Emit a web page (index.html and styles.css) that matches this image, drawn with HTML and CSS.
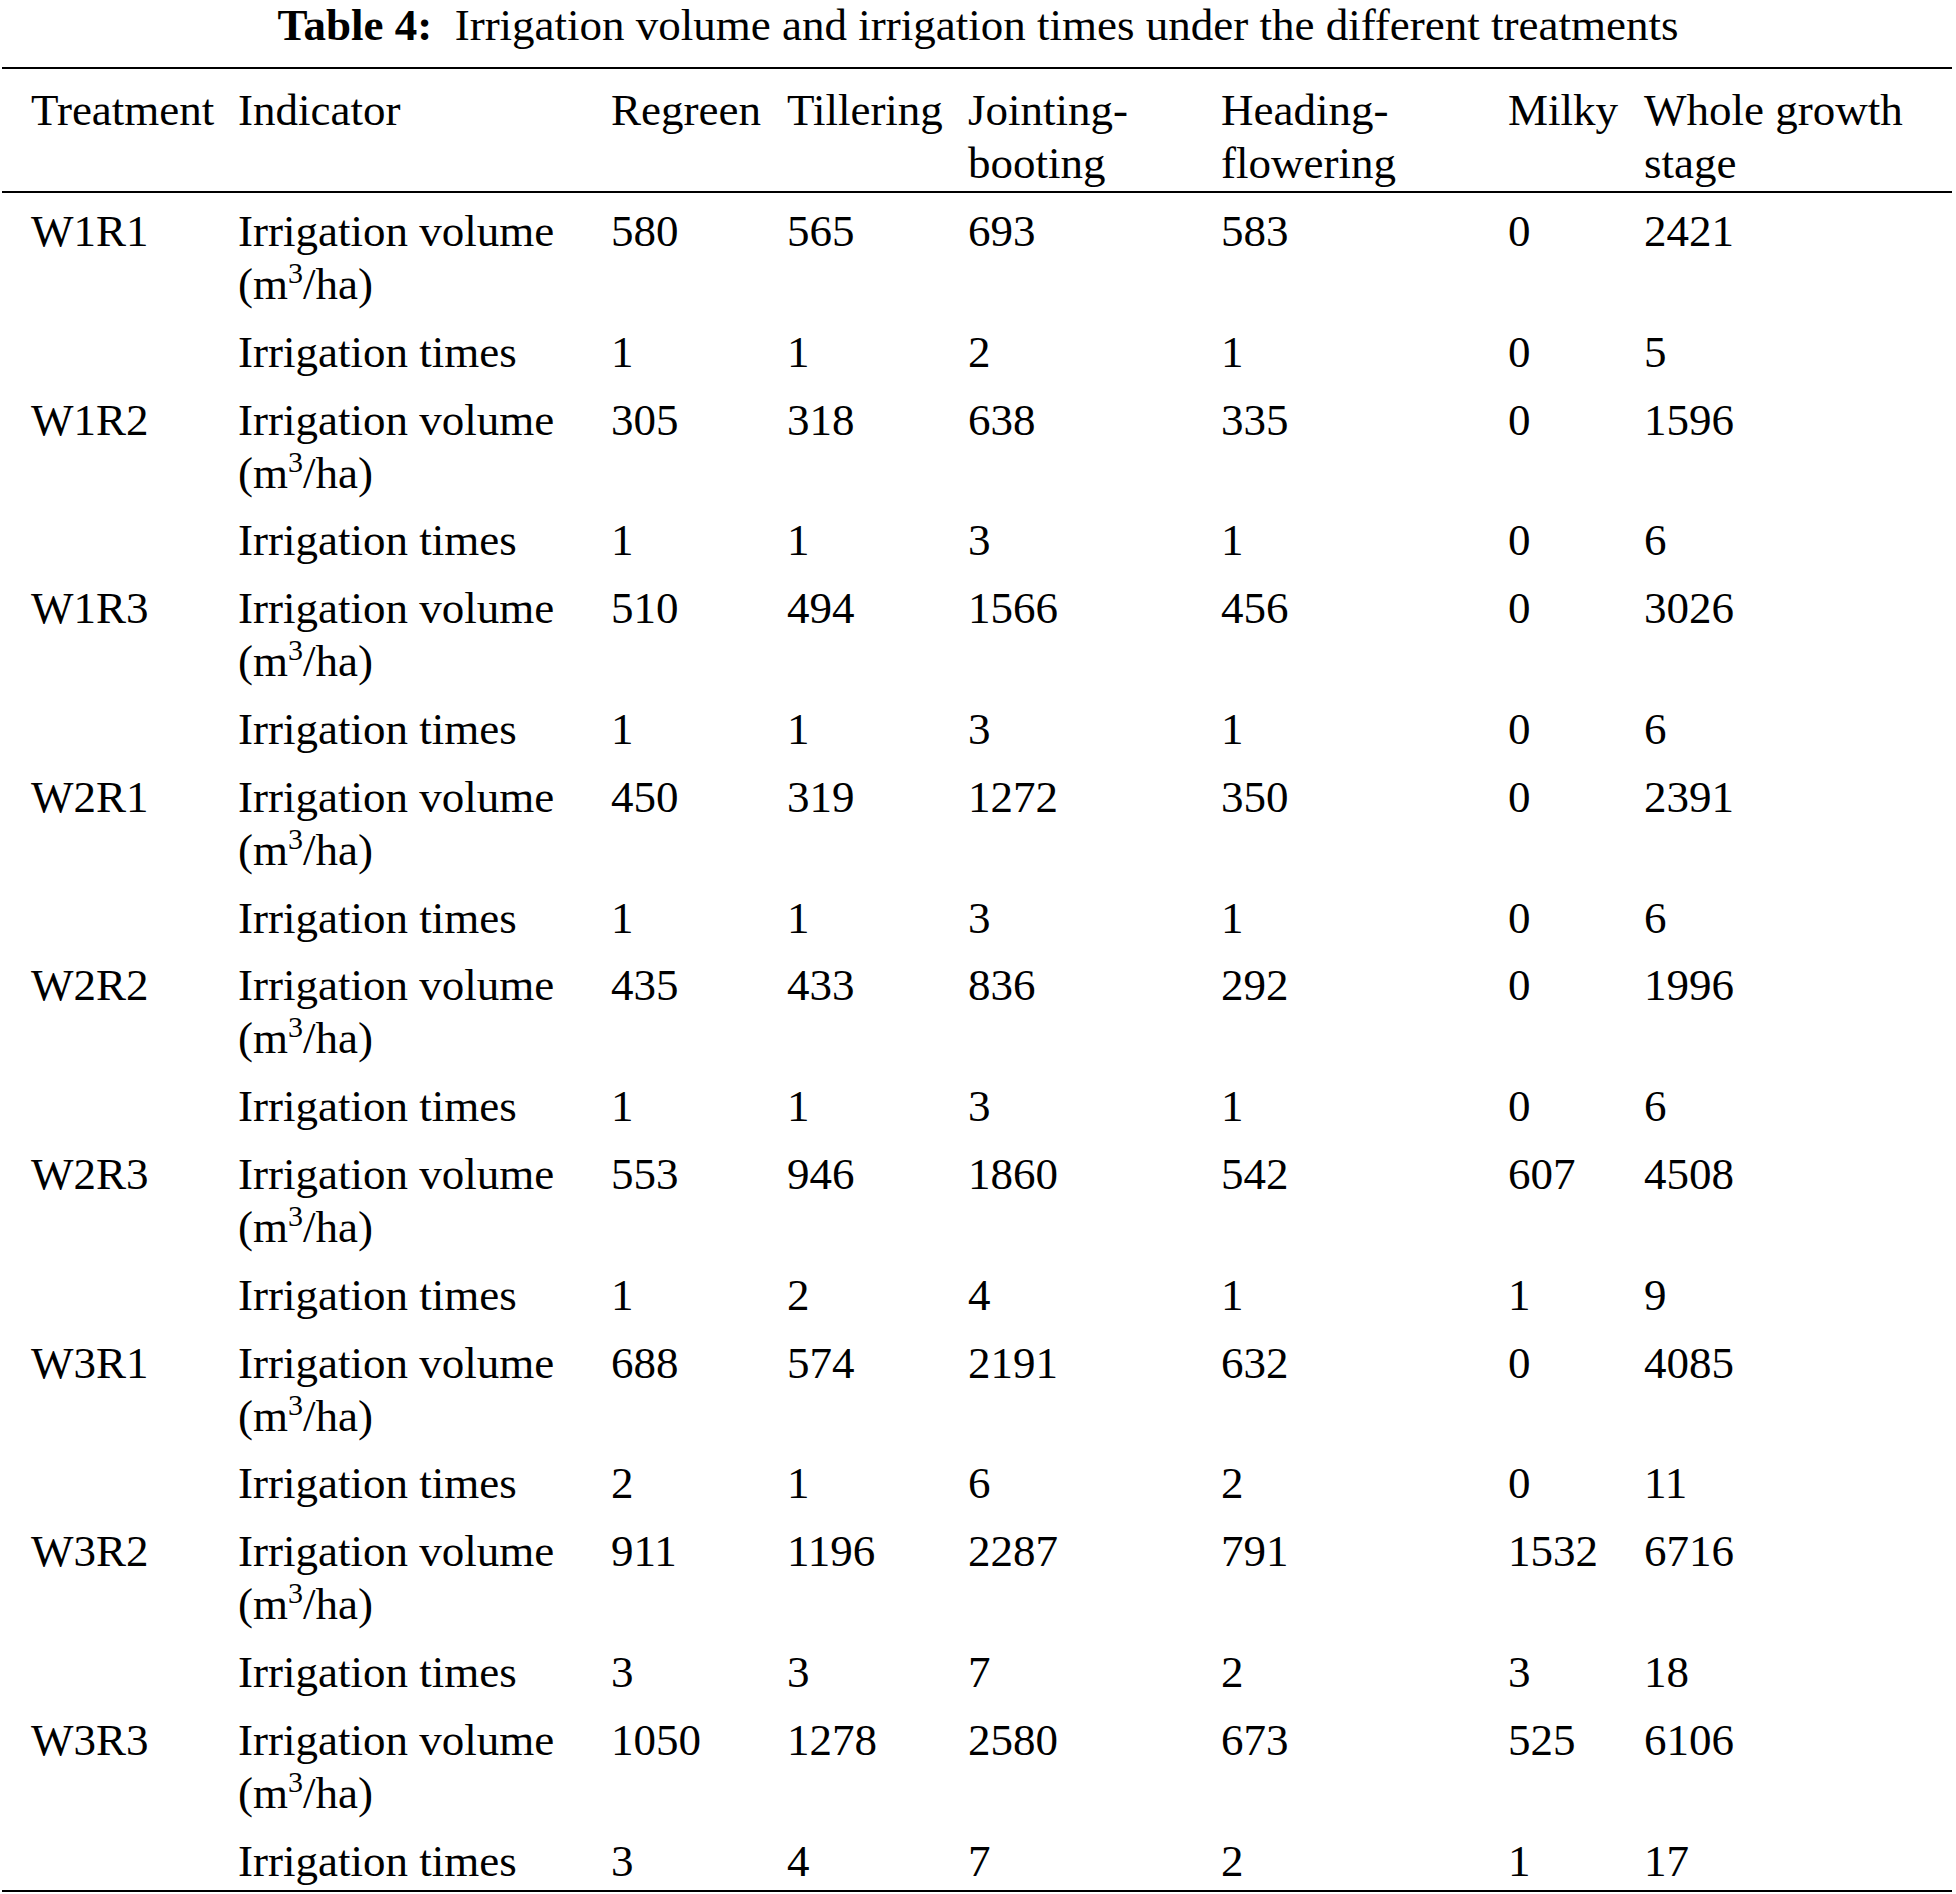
FILE: index.html
```html
<!DOCTYPE html>
<html lang="en">
<head>
<meta charset="utf-8">
<title>Table 4</title>
<link rel="stylesheet" href="styles.css">
</head>
<body>
<div class="page">
  <p class="caption"><b>Table 4:</b>&nbsp; Irrigation volume and irrigation times under the different treatments</p>
  <table class="data">
    <colgroup>
      <col class="c1"><col class="c2"><col class="c3"><col class="c4"><col class="c5"><col class="c6"><col class="c7"><col class="c8">
    </colgroup>
    <thead>
      <tr>
        <th>Treatment</th>
        <th>Indicator</th>
        <th>Regreen</th>
        <th>Tillering</th>
        <th>Jointing-<br>booting</th>
        <th>Heading-<br>flowering</th>
        <th>Milky</th>
        <th>Whole growth<br>stage</th>
      </tr>
    </thead>
    <tbody>
      <tr class="vol"><td>W1R1</td><td>Irrigation volume<br>(m<sup>3</sup>/ha)</td><td>580</td><td>565</td><td>693</td><td>583</td><td>0</td><td>2421</td></tr>
      <tr class="tim"><td></td><td>Irrigation times</td><td>1</td><td>1</td><td>2</td><td>1</td><td>0</td><td>5</td></tr>
      <tr class="vol"><td>W1R2</td><td>Irrigation volume<br>(m<sup>3</sup>/ha)</td><td>305</td><td>318</td><td>638</td><td>335</td><td>0</td><td>1596</td></tr>
      <tr class="tim"><td></td><td>Irrigation times</td><td>1</td><td>1</td><td>3</td><td>1</td><td>0</td><td>6</td></tr>
      <tr class="vol"><td>W1R3</td><td>Irrigation volume<br>(m<sup>3</sup>/ha)</td><td>510</td><td>494</td><td>1566</td><td>456</td><td>0</td><td>3026</td></tr>
      <tr class="tim"><td></td><td>Irrigation times</td><td>1</td><td>1</td><td>3</td><td>1</td><td>0</td><td>6</td></tr>
      <tr class="vol"><td>W2R1</td><td>Irrigation volume<br>(m<sup>3</sup>/ha)</td><td>450</td><td>319</td><td>1272</td><td>350</td><td>0</td><td>2391</td></tr>
      <tr class="tim"><td></td><td>Irrigation times</td><td>1</td><td>1</td><td>3</td><td>1</td><td>0</td><td>6</td></tr>
      <tr class="vol"><td>W2R2</td><td>Irrigation volume<br>(m<sup>3</sup>/ha)</td><td>435</td><td>433</td><td>836</td><td>292</td><td>0</td><td>1996</td></tr>
      <tr class="tim"><td></td><td>Irrigation times</td><td>1</td><td>1</td><td>3</td><td>1</td><td>0</td><td>6</td></tr>
      <tr class="vol"><td>W2R3</td><td>Irrigation volume<br>(m<sup>3</sup>/ha)</td><td>553</td><td>946</td><td>1860</td><td>542</td><td>607</td><td>4508</td></tr>
      <tr class="tim"><td></td><td>Irrigation times</td><td>1</td><td>2</td><td>4</td><td>1</td><td>1</td><td>9</td></tr>
      <tr class="vol"><td>W3R1</td><td>Irrigation volume<br>(m<sup>3</sup>/ha)</td><td>688</td><td>574</td><td>2191</td><td>632</td><td>0</td><td>4085</td></tr>
      <tr class="tim"><td></td><td>Irrigation times</td><td>2</td><td>1</td><td>6</td><td>2</td><td>0</td><td>11</td></tr>
      <tr class="vol"><td>W3R2</td><td>Irrigation volume<br>(m<sup>3</sup>/ha)</td><td>911</td><td>1196</td><td>2287</td><td>791</td><td>1532</td><td>6716</td></tr>
      <tr class="tim"><td></td><td>Irrigation times</td><td>3</td><td>3</td><td>7</td><td>2</td><td>3</td><td>18</td></tr>
      <tr class="vol"><td>W3R3</td><td>Irrigation volume<br>(m<sup>3</sup>/ha)</td><td>1050</td><td>1278</td><td>2580</td><td>673</td><td>525</td><td>6106</td></tr>
      <tr class="tim"><td></td><td>Irrigation times</td><td>3</td><td>4</td><td>7</td><td>2</td><td>1</td><td>17</td></tr>
    </tbody>
  </table>
</div>
</body>
</html>
```
FILE: styles.css
```css
html, body {
  margin: 0;
  padding: 0;
  background: #ffffff;
}

body {
  font-family: "Liberation Serif", "Times New Roman", serif;
  font-size: 45px;
  color: #000000;
}

.page {
  width: 1956px;
}

.caption {
  margin: 0 0 17px 0;
  text-align: center;
  line-height: 50px;
  white-space: nowrap;
}

.caption b {
  font-weight: bold;
}

.data {
  width: 1950px;
  margin-left: 2px;
  border-collapse: collapse;
  table-layout: fixed;
  border-top: 2px solid #000;
  border-bottom: 2px solid #000;
}

.c1 { width: 236px; }
.c2 { width: 373px; }
.c3 { width: 176px; }
.c4 { width: 181px; }
.c5 { width: 253px; }
.c6 { width: 287px; }
.c7 { width: 136px; }
.c8 { width: 308px; }

.data th,
.data td {
  text-align: left;
  vertical-align: top;
  font-weight: normal;
  line-height: 53px;
  padding: 12px 0 2.8px 0;
  white-space: nowrap;
}

.data th:first-child,
.data td:first-child {
  padding-left: 29px;
}

.data thead th {
  padding-top: 14.5px;
  padding-bottom: 1.5px;
  border-bottom: 2px solid #000;
}

.data sup {
  font-size: 30px;
  line-height: 0;
  vertical-align: 0.55em;
}
```
